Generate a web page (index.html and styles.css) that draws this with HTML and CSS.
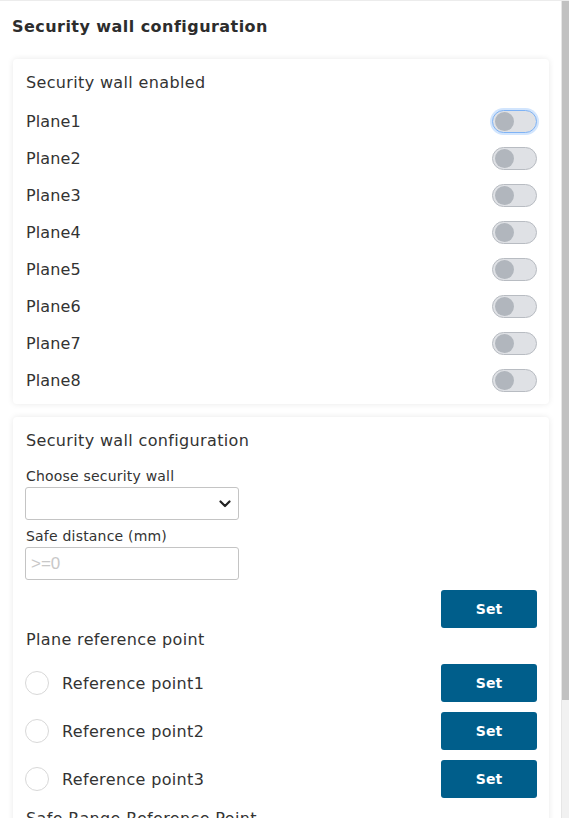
FILE: index.html
```html
<!DOCTYPE html>
<html>
<head>
<meta charset="utf-8">
<link rel="stylesheet" href="styles.css">
</head>
<body>
<div class="viewport">
  <div class="page">
    <header class="header">Security wall configuration</header>

    <section class="card card-planes">
      <div class="card-title">Security wall enabled</div>
      <div class="plane-row"><span>Plane1</span><span class="toggle focused"><span class="knob"></span></span></div>
      <div class="plane-row"><span>Plane2</span><span class="toggle"><span class="knob"></span></span></div>
      <div class="plane-row"><span>Plane3</span><span class="toggle"><span class="knob"></span></span></div>
      <div class="plane-row"><span>Plane4</span><span class="toggle"><span class="knob"></span></span></div>
      <div class="plane-row"><span>Plane5</span><span class="toggle"><span class="knob"></span></span></div>
      <div class="plane-row"><span>Plane6</span><span class="toggle"><span class="knob"></span></span></div>
      <div class="plane-row"><span>Plane7</span><span class="toggle"><span class="knob"></span></span></div>
      <div class="plane-row"><span>Plane8</span><span class="toggle"><span class="knob"></span></span></div>
    </section>

    <section class="card card-config">
      <div class="card-title">Security wall configuration</div>
      <div class="field-label">Choose security wall</div>
      <div class="select">
        <svg class="chevron" width="12" height="8" viewBox="0 0 12 8"><path d="M1.5 1.5 L6 6 L10.5 1.5" fill="none" stroke="#222" stroke-width="2.2" stroke-linecap="round" stroke-linejoin="round"/></svg>
      </div>
      <div class="field-label second">Safe distance (mm)</div>
      <div class="input"><span class="placeholder">&gt;=0</span></div>
      <div class="btn-row"><button class="btn">Set</button></div>
      <div class="section-title">Plane reference point</div>
      <div class="ref-list">
        <div class="ref-row"><span class="radio"></span><span class="ref-label">Reference point1</span><button class="btn">Set</button></div>
        <div class="ref-row"><span class="radio"></span><span class="ref-label">Reference point2</span><button class="btn">Set</button></div>
        <div class="ref-row"><span class="radio"></span><span class="ref-label">Reference point3</span><button class="btn">Set</button></div>
      </div>
      <div class="section-title range">Safe Range Reference Point</div>
    </section>
  </div>
  <div class="scrollbar"><div class="thumb"></div></div>
</div>
</body>
</html>
```
FILE: styles.css
```css
html, body {
  margin: 0;
  padding: 0;
  height: 100%;
  overflow: hidden;
  background: #ffffff;
}
body {
  font-family: "DejaVu Sans", Verdana, sans-serif;
  color: #333;
}
.viewport {
  height: 818px;
  display: flex;
  overflow: hidden;
  border-top: 1px solid #ececec;
  box-sizing: border-box;
}
.page {
  width: 561px;
  flex: none;
  height: 100%;
  overflow: hidden;
  padding: 0 12px 24px 13px;
  box-sizing: border-box;
}
.scrollbar {
  width: 8px;
  flex: none;
  background: #f1f1f1;
  border-left: 1px solid #e6e6e6;
  box-sizing: border-box;
}
.thumb {
  height: 700px;
  background: #c1c1c1;
  margin-top: -1px;
}
.header {
  font-weight: bold;
  font-size: 16px;
  line-height: 24px;
  letter-spacing: 0.45px;
  padding: 14px 0 20px 0;
  margin-left: -1px;
  color: #2d2d2d;
}
.card {
  background: #fff;
  border-radius: 4px;
  box-shadow: 0 0 6px rgba(0, 0, 0, 0.09);
  padding: 12px 12px 5px 12px;
}
.card + .card {
  margin-top: 13px;
}
.card-title, .section-title {
  font-size: 16px;
  line-height: 24px;
  letter-spacing: 0.35px;
  padding-left: 1px;
}
.card-planes .card-title {
  margin-bottom: 8px;
}
.plane-row {
  height: 37px;
  display: flex;
  align-items: center;
  justify-content: space-between;
  font-size: 16px;
  letter-spacing: 0.1px;
  padding-left: 1px;
}
.toggle {
  width: 41px;
  height: 21px;
  border: 1px solid #b8bcc2;
  border-radius: 12px;
  background: #dfe1e5;
  display: flex;
  align-items: center;
  padding: 0 1px;
  box-sizing: content-box;
}
.toggle.focused {
  border-color: #7fb3f5;
  box-shadow: 0 0 0 2px #d2e5fd;
}
.knob {
  width: 19px;
  height: 19px;
  border-radius: 50%;
  background: #b1b6bd;
  margin-left: 1px;
}
.field-label {
  font-size: 14px;
  line-height: 18px;
  letter-spacing: 0.2px;
  margin-top: 14px;
  padding-left: 1px;
}
.field-label.second {
  margin-top: 7px;
}
.select, .input {
  width: 214px;
  height: 33px;
  margin-top: 2px;
  border: 1px solid #c4c4c4;
  border-radius: 3px;
  box-sizing: border-box;
  display: flex;
  align-items: center;
}
.select {
  justify-content: flex-end;
  padding-right: 7px;
}
.input {
  padding-left: 5px;
}
.placeholder {
  font-family: "Liberation Sans", Arial, sans-serif;
  color: #c8c8c8;
  font-size: 17px;
}
.btn-row {
  display: flex;
  justify-content: flex-end;
  margin-top: 10px;
}
.btn {
  width: 96px;
  height: 38px;
  background: #005e8b;
  color: #fff;
  border: none;
  border-radius: 3px;
  font-family: "DejaVu Sans", Verdana, sans-serif;
  font-weight: bold;
  font-size: 14px;
  padding: 0;
}
.ref-list {
  display: flex;
  flex-direction: column;
  gap: 10px;
  margin-top: 12px;
}
.ref-row {
  height: 38px;
  display: flex;
  align-items: center;
  font-size: 16px;
  letter-spacing: 0.35px;
}
.radio {
  width: 22px;
  height: 22px;
  border: 1px solid #d8d8d8;
  border-radius: 50%;
  flex: none;
}
.ref-label {
  flex: 1;
  margin-left: 13px;
}
.section-title.range {
  margin-top: 9px;
}
```
